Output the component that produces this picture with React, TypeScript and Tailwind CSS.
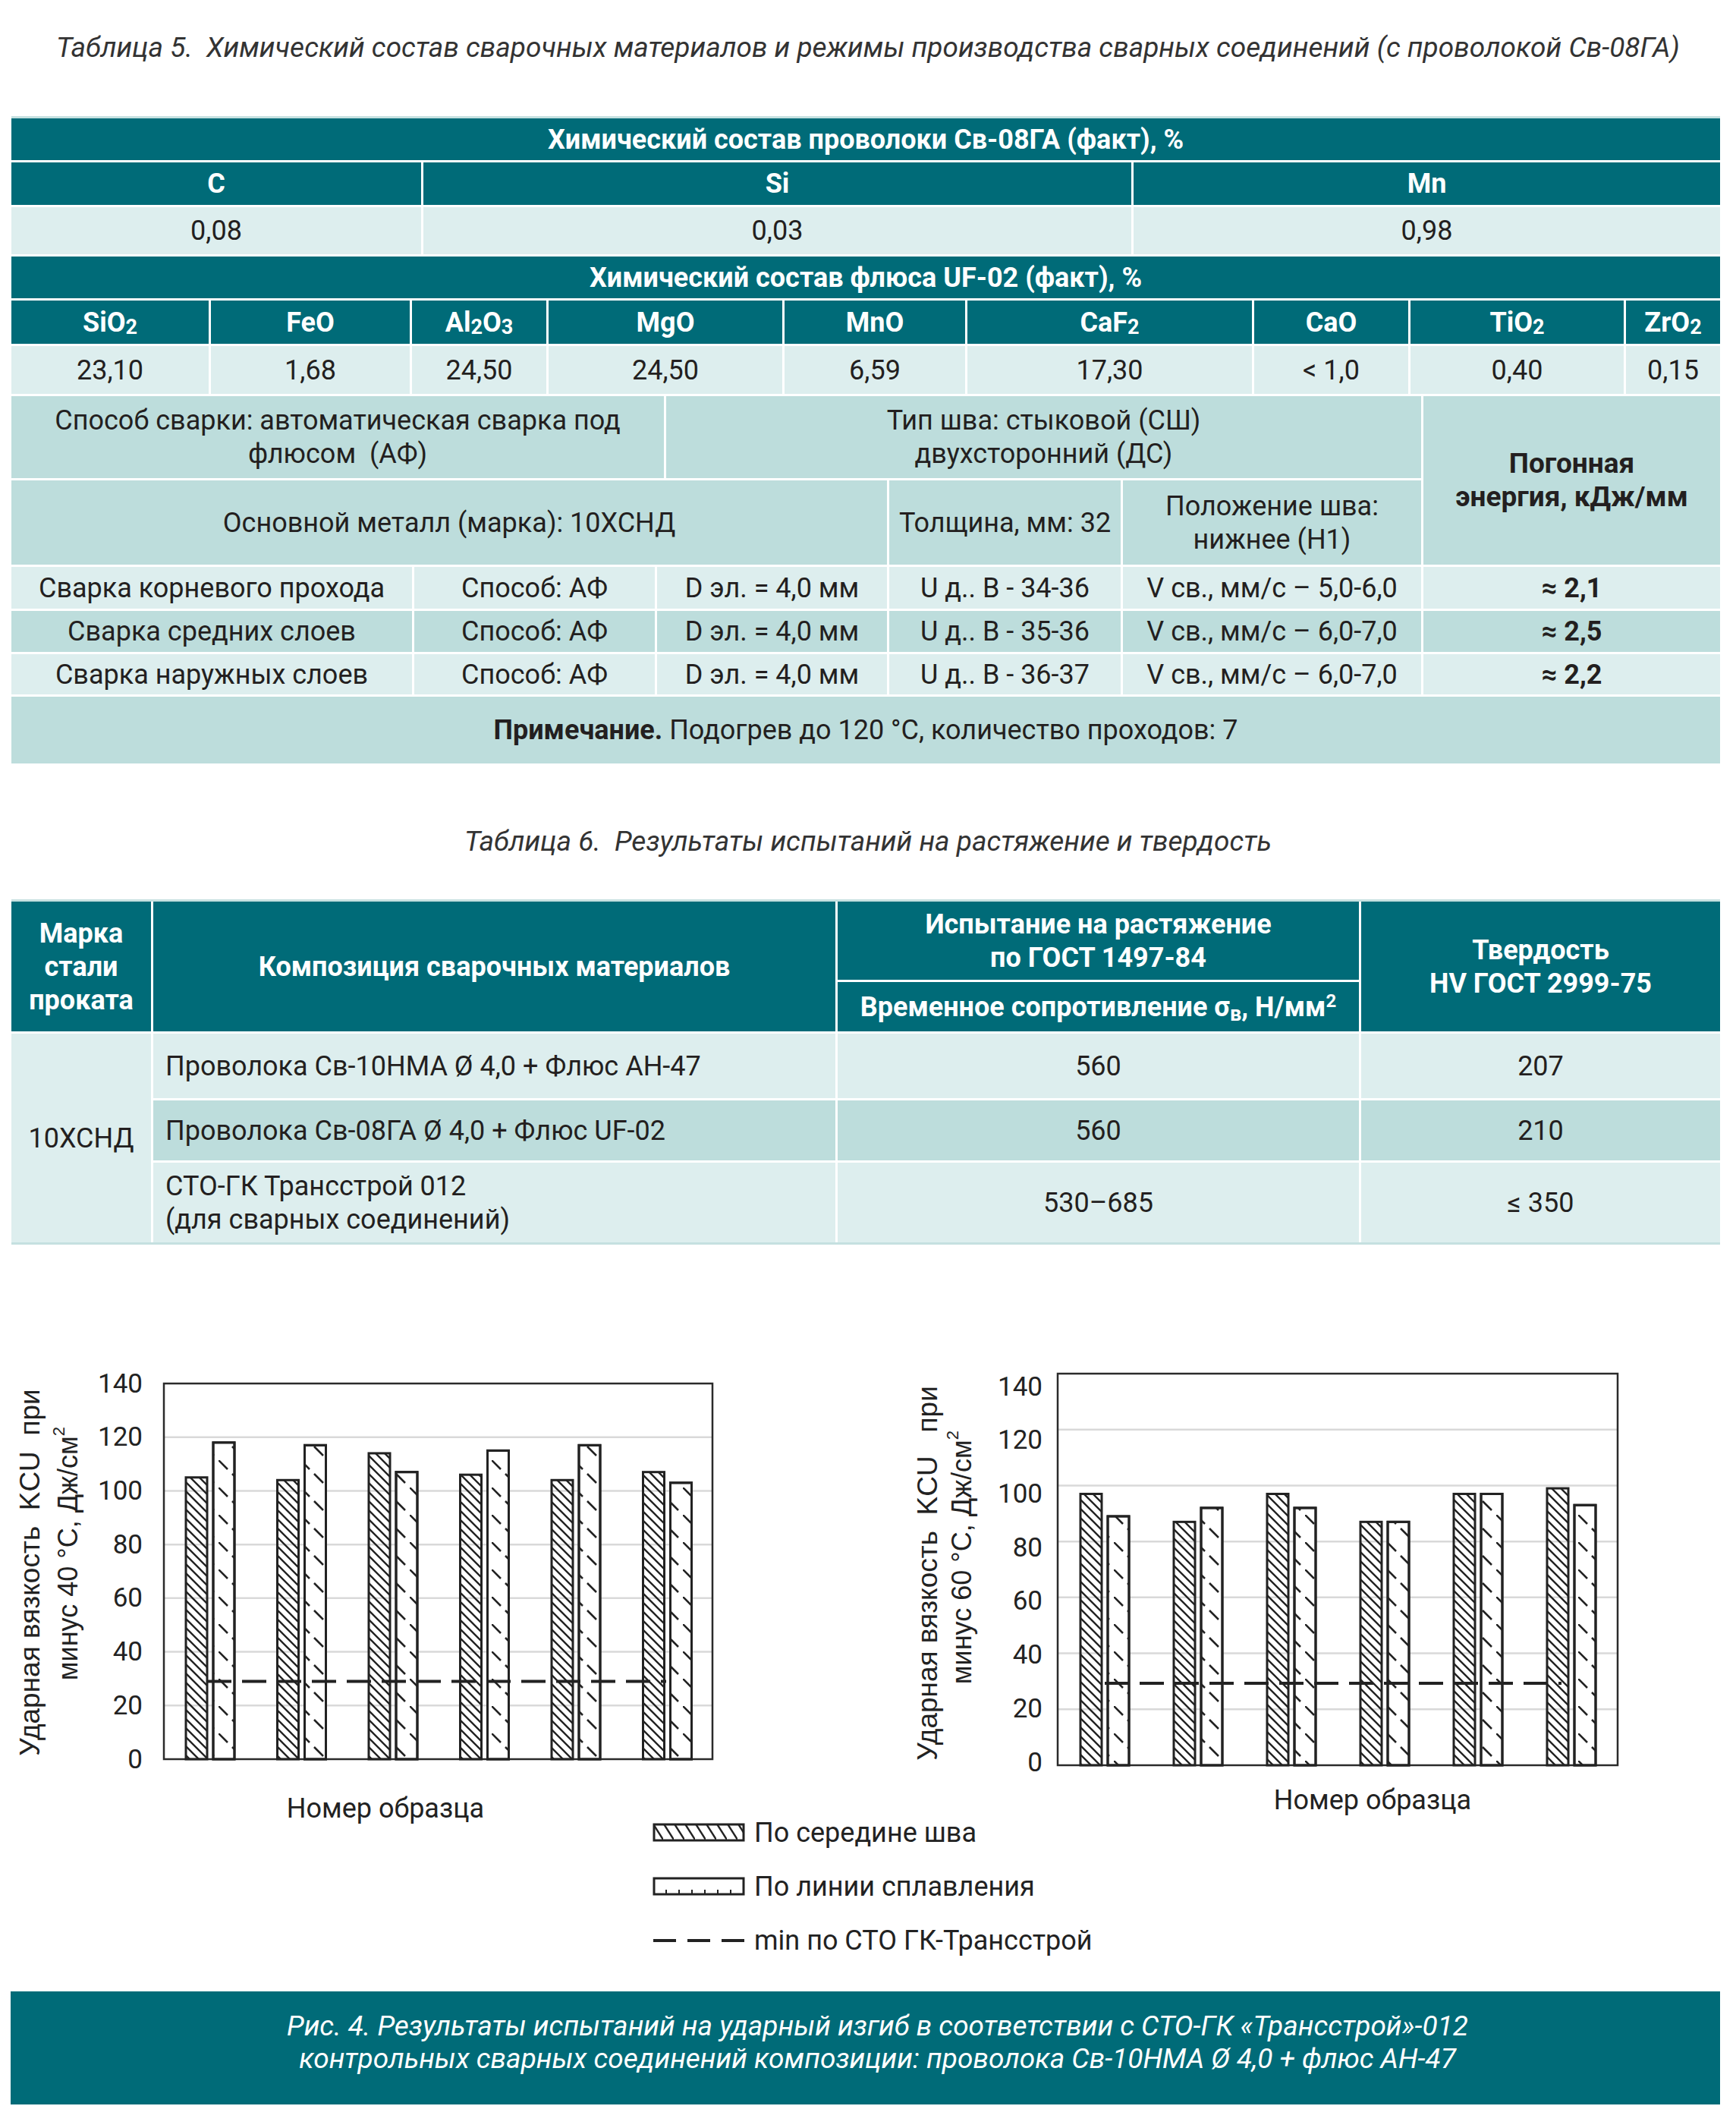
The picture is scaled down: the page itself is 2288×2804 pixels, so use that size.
import React from 'react';

type ChartCfg = {
  id: string;
  px: number;
  py: number;
  pw: number;
  ph: number;
  off: number;
  lx: number;
  ly0: number;
  ly1: number;
  data: [number, number][];
  minV: number;
  dx0: number;
  dx1: number;
  t1x: number;
  t1y: number;
  t2x: number;
  t2y: number;
  line1: string;
  temp: string;
  nx: number;
  ny: number;
};

const chart1: ChartCfg = {
  id: 'c1',
  px: 216,
  py: 43,
  pw: 723,
  ph: 495,
  off: 29,
  lx: 188,
  ly0: 43,
  ly1: 538,
  data: [
    [105, 118],
    [104, 117],
    [114, 107],
    [106, 115],
    [104, 117],
    [107, 103],
  ],
  minV: 29,
  dx0: 273,
  dx1: 878,
  t1x: 39,
  t1y: 292,
  t2x: 89,
  t2y: 267,
  line1: 'Ударная вязкость  KCU  при',
  temp: 'минус 40 °С, Дж/см',
  nx: 508,
  ny: 603,
};

const chart2: ChartCfg = {
  id: 'c2',
  px: 250,
  py: 30,
  pw: 738,
  ph: 516,
  off: 30,
  lx: 230,
  ly0: 47,
  ly1: 542,
  data: [
    [97, 89],
    [87, 92],
    [97, 92],
    [87, 87],
    [97, 97],
    [99, 93],
  ],
  minV: 29.3,
  dx0: 312,
  dx1: 914,
  t1x: 78,
  t1y: 293,
  t2x: 123,
  t2y: 272,
  line1: 'Ударная вязкость  KCU   при',
  temp: 'минус 60 °С, Дж/см',
  nx: 665,
  ny: 592,
};

function Chart({ c }: { c: ChartCfg }) {
  const unit = c.ph / 140;
  const cat = c.pw / 6;
  const bottom = c.py + c.ph;
  const minY = bottom - c.minV * unit;
  const step = (c.ly1 - c.ly0) / 7;

  return (
    <svg width={1144} height={640} viewBox="0 0 1144 640" className="block shrink-0">
      <defs>
        <pattern id={`${c.id}-mid`} patternUnits="userSpaceOnUse" width="12" height="12">
          <path d="M-3,-3 L15,15 M-3,9 L3,15 M9,-3 L15,3" stroke="#222" strokeWidth="2.4" />
        </pattern>
        <pattern id={`${c.id}-fus`} patternUnits="userSpaceOnUse" width="36" height="36">
          <path d="M0,0 L12,12 M18,18 L30,30" stroke="#222" strokeWidth="2.6" />
        </pattern>
      </defs>

      {[20, 40, 60, 80, 100, 120].map((g) => (
        <line
          key={g}
          x1={c.px}
          x2={c.px + c.pw}
          y1={bottom - g * unit}
          y2={bottom - g * unit}
          stroke="#d9d9d9"
          strokeWidth={2.5}
        />
      ))}
      <rect x={c.px} y={c.py} width={c.pw} height={c.ph} fill="none" stroke="#2b2b2b" strokeWidth={2.5} />

      {c.data.map(([l, r], i) => {
        const x0 = c.px + i * cat + c.off;
        return (
          <g key={i}>
            <rect x={x0} y={bottom - l * unit} width={28} height={l * unit} fill={`url(#${c.id}-mid)`} stroke="#222" strokeWidth={3} />
            <rect x={x0 + 36} y={bottom - r * unit} width={28} height={r * unit} fill="white" stroke="#222" strokeWidth={3} />
            <rect x={x0 + 36} y={bottom - r * unit} width={28} height={r * unit} fill={`url(#${c.id}-fus)`} stroke="#222" strokeWidth={3} />
          </g>
        );
      })}

      <line x1={c.dx0} x2={c.dx1} y1={minY} y2={minY} stroke="#222" strokeWidth={4} strokeDasharray="32 14" />

      {[140, 120, 100, 80, 60, 40, 20, 0].map((v, i) => (
        <text
          key={v}
          x={c.lx}
          y={c.ly0 + i * step}
          textAnchor="end"
          dominantBaseline="central"
          fontFamily="Roboto, sans-serif"
          fontSize={35}
          fill="#222"
        >
          {v}
        </text>
      ))}

      <text
        transform={`translate(${c.t1x} ${c.t1y}) rotate(-90)`}
        textAnchor="middle"
        dominantBaseline="central"
        fontFamily="'Liberation Sans', Arial, sans-serif"
        fontSize={37}
        fill="#222"
        className="whitespace-pre"
      >
        {c.line1}
      </text>
      <text
        transform={`translate(${c.t2x} ${c.t2y}) rotate(-90)`}
        textAnchor="middle"
        dominantBaseline="central"
        fontFamily="'Liberation Sans', Arial, sans-serif"
        fontSize={36}
        fill="#222"
      >
        {c.temp}
        <tspan fontSize={22} dy={-12}>
          2
        </tspan>
      </text>

      <text x={c.nx} y={c.ny} textAnchor="middle" dominantBaseline="central" fontFamily="Roboto, sans-serif" fontSize={36} fill="#222">
        Номер образца
      </text>
    </svg>
  );
}

function LegendRow({ kind, label }: { kind: 'mid' | 'fus' | 'min'; label: React.ReactNode }) {
  return (
    <div className="flex items-center h-[71px]">
      <svg width={122} height={26} viewBox="0 0 122 26" className="block shrink-0">
        <defs>
          <pattern id="lg-mid" patternUnits="userSpaceOnUse" width="14" height="22">
            <path d="M0,0 L14,22" stroke="#222" strokeWidth="2.4" />
          </pattern>
        </defs>
        {kind === 'mid' && <rect x={2} y={2} width={118} height={21} fill="url(#lg-mid)" stroke="#222" strokeWidth={3} />}
        {kind === 'fus' && (
          <g>
            <rect x={2} y={2} width={118} height={21} fill="none" stroke="#222" strokeWidth={3} />
            {[18, 35, 52, 69, 86, 103].map((x) => (
              <line key={x} x1={x} x2={x} y1={17} y2={22} stroke="#222" strokeWidth={2} />
            ))}
          </g>
        )}
        {kind === 'min' && <line x1={1} x2={121} y1={13} y2={13} stroke="#222" strokeWidth={4} strokeDasharray="30 15" />}
      </svg>
      <span className="ml-[12px] text-[36px] leading-[44px] text-[#222]">{label}</span>
    </div>
  );
}

export default function App() {
  return (
    <div className="w-[2288px] h-[2804px] bg-white font-['Roboto',sans-serif] text-[#231f20] overflow-hidden">
      {/* Таблица 5 */}
      <div className="pt-[40px] h-[85px] text-center italic text-[37px] leading-[45px] text-[#333] whitespace-pre">
        Таблица 5.  Химический состав сварочных материалов и режимы производства сварных соединений (с проволокой Св-08ГА)
      </div>

      <div className="mt-[68px] ml-[15px] w-[2252px] border-t-[3px] border-[#c5e0e0] text-[36px] leading-[44px]">
        <div className="flex h-[58px] border-b-[3px] border-white bg-[#006b78] text-white font-bold text-[36px] items-center justify-center">
          Химический состав проволоки Св-08ГА (факт), %
        </div>
        <div className="flex h-[59px] border-b-[3px] border-white bg-[#006b78] text-white font-bold text-[36px]">
          <div className="w-[543px] border-r-[3px] border-white flex items-center justify-center">C</div>
          <div className="w-[936px] border-r-[3px] border-white flex items-center justify-center">Si</div>
          <div className="flex-1 flex items-center justify-center">Mn</div>
        </div>
        <div className="flex h-[65px] border-b-[3px] border-white bg-[#ddeeee]">
          <div className="w-[543px] border-r-[3px] border-white flex items-center justify-center">0,08</div>
          <div className="w-[936px] border-r-[3px] border-white flex items-center justify-center">0,03</div>
          <div className="flex-1 flex items-center justify-center">0,98</div>
        </div>
        <div className="flex h-[58px] border-b-[3px] border-white bg-[#006b78] text-white font-bold text-[36px] items-center justify-center">
          Химический состав флюса UF-02 (факт), %
        </div>
        <div className="flex h-[60px] border-b-[3px] border-white bg-[#006b78] text-white font-bold text-[36px]">
          <div className="w-[263px] border-r-[3px] border-white flex items-center justify-center">
            SiO<sub>2</sub>
          </div>
          <div className="w-[265px] border-r-[3px] border-white flex items-center justify-center">FeO</div>
          <div className="w-[180px] border-r-[3px] border-white flex items-center justify-center">
            Al<sub>2</sub>O<sub>3</sub>
          </div>
          <div className="w-[311px] border-r-[3px] border-white flex items-center justify-center">MgO</div>
          <div className="w-[241px] border-r-[3px] border-white flex items-center justify-center">MnO</div>
          <div className="w-[378px] border-r-[3px] border-white flex items-center justify-center">
            CaF<sub>2</sub>
          </div>
          <div className="w-[206px] border-r-[3px] border-white flex items-center justify-center">CaO</div>
          <div className="w-[284px] border-r-[3px] border-white flex items-center justify-center">
            TiO<sub>2</sub>
          </div>
          <div className="flex-1 flex items-center justify-center">
            ZrO<sub>2</sub>
          </div>
        </div>
        <div className="flex h-[66px] border-b-[3px] border-white bg-[#ddeeee]">
          <div className="w-[263px] border-r-[3px] border-white flex items-center justify-center">23,10</div>
          <div className="w-[265px] border-r-[3px] border-white flex items-center justify-center">1,68</div>
          <div className="w-[180px] border-r-[3px] border-white flex items-center justify-center">24,50</div>
          <div className="w-[311px] border-r-[3px] border-white flex items-center justify-center">24,50</div>
          <div className="w-[241px] border-r-[3px] border-white flex items-center justify-center">6,59</div>
          <div className="w-[378px] border-r-[3px] border-white flex items-center justify-center">17,30</div>
          <div className="w-[206px] border-r-[3px] border-white flex items-center justify-center">&lt; 1,0</div>
          <div className="w-[284px] border-r-[3px] border-white flex items-center justify-center">0,40</div>
          <div className="flex-1 flex items-center justify-center">0,15</div>
        </div>

        <div className="flex">
          <div className="w-[1861px] border-r-[3px] border-white">
            <div className="flex h-[111px] border-b-[3px] border-white bg-[#bddddc]">
              <div className="w-[863px] border-r-[3px] border-white flex items-center justify-center text-center">
                <span className="whitespace-pre">
                  Способ сварки: автоматическая сварка под
                  <br />
                  флюсом  (АФ)
                </span>
              </div>
              <div className="flex-1 flex items-center justify-center text-center">
                <span>
                  Тип шва: стыковой (СШ)
                  <br />
                  двухсторонний (ДС)
                </span>
              </div>
            </div>
            <div className="flex h-[114px] border-b-[3px] border-white bg-[#bddddc]">
              <div className="w-[1157px] border-r-[3px] border-white flex items-center justify-center">
                Основной металл (марка): 10ХСНД
              </div>
              <div className="w-[308px] border-r-[3px] border-white flex items-center justify-center">Толщина, мм: 32</div>
              <div className="flex-1 flex items-center justify-center text-center">
                <span>
                  Положение шва:
                  <br />
                  нижнее (Н1)
                </span>
              </div>
            </div>
          </div>
          <div className="flex-1 h-[225px] border-b-[3px] border-white bg-[#bddddc] flex items-center justify-center text-center font-bold text-[37px]">
            <span>
              Погонная
              <br />
              энергия, кДж/мм
            </span>
          </div>
        </div>

        {[
          { h: 'h-[58px]', bg: 'bg-[#ddeeee]', a: 'Сварка корневого прохода', u: 'U д.. В - 34-36', v: 'V св., мм/с – 5,0-6,0', e: '≈ 2,1' },
          { h: 'h-[57px]', bg: 'bg-[#bddddc]', a: 'Сварка средних слоев', u: 'U д.. В - 35-36', v: 'V св., мм/с – 6,0-7,0', e: '≈ 2,5' },
          { h: 'h-[56px]', bg: 'bg-[#ddeeee]', a: 'Сварка наружных слоев', u: 'U д.. В - 36-37', v: 'V св., мм/с – 6,0-7,0', e: '≈ 2,2' },
        ].map((r) => (
          <div key={r.a} className={`flex border-b-[3px] border-white ${r.h} ${r.bg}`}>
            <div className="w-[531px] border-r-[3px] border-white flex items-center justify-center">{r.a}</div>
            <div className="w-[320px] border-r-[3px] border-white flex items-center justify-center">Способ: АФ</div>
            <div className="w-[306px] border-r-[3px] border-white flex items-center justify-center">D эл. = 4,0 мм</div>
            <div className="w-[308px] border-r-[3px] border-white flex items-center justify-center">{r.u}</div>
            <div className="w-[396px] border-r-[3px] border-white flex items-center justify-center">{r.v}</div>
            <div className="flex-1 flex items-center justify-center font-bold">{r.e}</div>
          </div>
        ))}

        <div className="h-[88px] bg-[#bddddc] flex items-center justify-center">
          <span>
            <b className="font-bold">Примечание.</b> Подогрев до 120 °С, количество проходов: 7
          </span>
        </div>
      </div>

      {/* Таблица 6 */}
      <div className="mt-[80px] h-[45px] text-center italic text-[37px] leading-[45px] text-[#333] whitespace-pre">
        Таблица 6.  Результаты испытаний на растяжение и твердость
      </div>

      <div className="mt-[54px] ml-[15px] w-[2252px] border-t-[3px] border-b-[3px] border-[#c5e0e0] text-[36px] leading-[44px]">
        <div className="flex h-[174px] border-b-[3px] border-white bg-[#006b78] text-white font-bold text-[36px] text-center">
          <div className="w-[187px] border-r-[3px] border-white flex items-center justify-center">
            <span>
              Марка
              <br />
              стали
              <br />
              проката
            </span>
          </div>
          <div className="w-[902px] border-r-[3px] border-white flex items-center justify-center">Композиция сварочных материалов</div>
          <div className="w-[690px] border-r-[3px] border-white flex flex-col">
            <div className="h-[106px] border-b-[3px] border-white flex items-center justify-center">
              <span>
                Испытание на растяжение
                <br />
                по ГОСТ 1497-84
              </span>
            </div>
            <div className="flex-1 flex items-center justify-center">
              <span>
                Временное сопротивление σ<sub>в</sub>, Н/мм<sup className="text-[24px]">2</sup>
              </span>
            </div>
          </div>
          <div className="flex-1 flex items-center justify-center">
            <span>
              Твердость
              <br />
              HV ГОСТ 2999-75
            </span>
          </div>
        </div>

        <div className="flex h-[275px]">
          <div className="w-[187px] border-r-[3px] border-white bg-[#ddeeee] flex items-center justify-center">10ХСНД</div>
          <div className="flex-1 flex flex-col">
            <div className="flex h-[88px] border-b-[3px] border-white bg-[#ddeeee]">
              <div className="w-[902px] border-r-[3px] border-white flex items-center pl-[16px]">
                Проволока Св-10НМА Ø 4,0 + Флюс АН-47
              </div>
              <div className="w-[690px] border-r-[3px] border-white flex items-center justify-center">560</div>
              <div className="flex-1 flex items-center justify-center">207</div>
            </div>
            <div className="flex h-[82px] border-b-[3px] border-white bg-[#bddddc]">
              <div className="w-[902px] border-r-[3px] border-white flex items-center pl-[16px]">
                Проволока Св-08ГА Ø 4,0 + Флюс UF-02
              </div>
              <div className="w-[690px] border-r-[3px] border-white flex items-center justify-center">560</div>
              <div className="flex-1 flex items-center justify-center">210</div>
            </div>
            <div className="flex flex-1 bg-[#ddeeee]">
              <div className="w-[902px] border-r-[3px] border-white flex items-center pl-[16px]">
                <span>
                  СТО-ГК Трансстрой 012
                  <br />
                  (для сварных соединений)
                </span>
              </div>
              <div className="w-[690px] border-r-[3px] border-white flex items-center justify-center">530–685</div>
              <div className="flex-1 flex items-center justify-center">≤ 350</div>
            </div>
          </div>
        </div>
      </div>

      {/* Рисунок 4 */}
      <div className="mt-[140px] flex">
        <Chart c={chart1} />
        <Chart c={chart2} />
      </div>

      <div className="-mt-[41px] ml-[860px] flex flex-col">
        <LegendRow kind="mid" label="По середине шва" />
        <LegendRow kind="fus" label="По линии сплавления" />
        <LegendRow kind="min" label="min по СТО ГК-Трансстрой" />
      </div>

      <div className="mt-[32px] ml-[14px] w-[2253px] h-[149px] pt-[24px] pl-[32px] bg-[#006b78] text-white italic text-[37px] leading-[43px] text-center">
        Рис. 4. Результаты испытаний на ударный изгиб в соответствии с СТО-ГК «Трансстрой»-012
        <br />
        контрольных сварных соединений композиции: проволока Св-10НМА Ø 4,0 + флюс АН-47
      </div>
    </div>
  );
}
